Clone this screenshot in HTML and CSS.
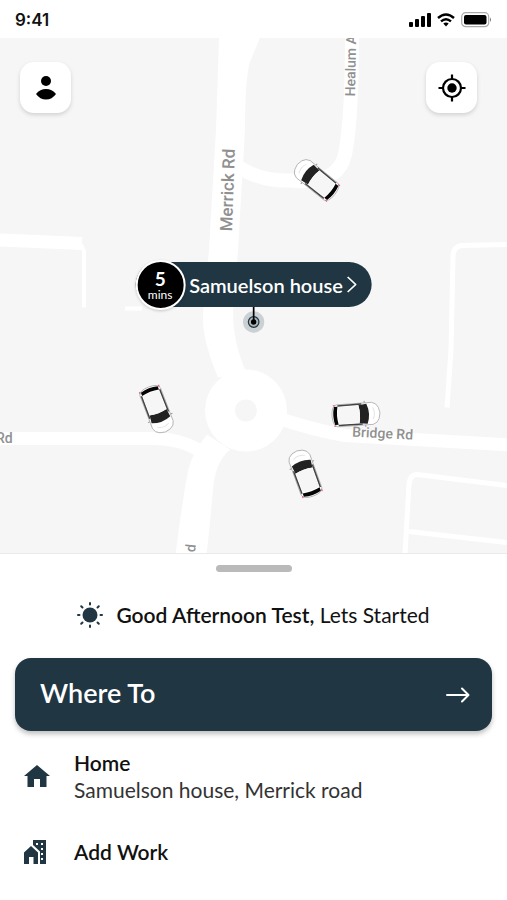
FILE: index.html
```
<!DOCTYPE html>
<html lang="en">
<head>
    <meta charset="UTF-8">
    <meta name="viewport" content="width=device-width, initial-scale=1.0">
    <title>Where To</title>
    <link rel="stylesheet" href="styles.css">
</head>
<body>
    <header class="status-bar">
        <span class="time">9:41</span>
        <div class="status-icons">
            <svg width="22" height="14" viewBox="0 0 22 14">
                <rect x="0" y="9" width="4" height="5" rx="1"/>
                <rect x="6" y="6" width="4" height="8" rx="1"/>
                <rect x="12" y="3" width="4" height="11" rx="1"/>
                <rect x="18" y="0" width="4" height="14" rx="1"/>
            </svg>
            <svg width="18" height="14" viewBox="0 0 18 14" fill="none" stroke="#000" stroke-width="2.4">
                <path d="M1 5Q9-2 17 5"/>
                <path d="M4 8.400Q9 4 14 8.400"/>
                <path d="M6.300 10.600Q9 8.500 11.700 10.600L9 13.500Z" fill="#000" stroke="none"/>
            </svg>
            <svg width="31" height="16" viewBox="0 0 31 16">
                <rect x="0.700" y="0.700" width="27" height="14" rx="4" fill="#fff" stroke="#aaa" stroke-width="1.200"/>
                <rect x="3" y="3" width="22.500" height="9.500" rx="2"/>
                <path d="M29 5.500Q31 7.700 29 10Z" fill="#777"/>
            </svg>
        </div>
    </header>

    <main class="map">
        <svg class="map-canvas" viewBox="0 38 507 516" preserveAspectRatio="xMidYMid slice">
            <defs>
                <g id="car">
                    <path d="M-11-11Q-13-23 0-24Q13-23 11-11L11 19Q10 24 0 24Q-10 24-11 19Z" fill="#fff" stroke="#aaa" stroke-width="0.800"/>
                    <path d="M-11-9H-13M11-9H13" stroke="#999"/>
                    <path d="M-6-17Q0-20 6-17" fill="none" stroke="#e4e4e4"/>
                    <path d="M-10-11Q0-15 10-11L9-3Q0-5-9-3Z" fill="#222"/>
                    <path d="M-10-6L-9.800 18M10-6L9.800 18" stroke="#444" stroke-width="1.500"/>
                    <path d="M-8.500-3Q0-5 8.500-3L8.500 17Q0 19-8.500 17Z" fill="#f6f6f6"/>
                    <path d="M-9 18Q0 20 9 18L9 21.500Q0 24-9 21.500Z" fill="#050505"/>
                    <path d="M-10.200 20.500V22.500M10.200 20.500V22.500" stroke="#e0607a" stroke-width="1.200"/>
                </g>
            </defs>

            <!-- side streets -->
            <g fill="none" stroke="#fff" stroke-linejoin="round">
                <path d="M238 167Q260 182 290 181Q338 186 345 155Q352 120 352 38" stroke-width="14"/>
                <path d="M-10 240L82 244" stroke-width="13"/>
                <path d="M81 245L84 252V308M125 309H142" stroke-width="4"/>
                <path d="M507 245L462 246Q453 247 453 257L451 350L447 408" stroke-width="5"/>
                <path d="M507 486L417 475Q410 475 409 485L405 554M409 532L507 543" stroke-width="5"/>
                <path d="M-10 439H150Q178 438 200 451M276 418Q315 431 345 436L520 446" stroke-width="13"/>
            </g>

            <!-- Merrick Rd and the roundabout -->
            <path d="M219 38L216 130L209 250L203 315Q202 340 218 378L247 374Q233 345 233 312L238 250L245 130Q245 85 249 65L260 38Z" fill="#fff"/>
            <path d="M207 435Q190 455 187 477Q181 510 175 560L206 560Q210 525 213 490Q215 463 230 450Z" fill="#fff"/>
            <circle cx="246" cy="411" r="41" fill="#fff"/>
            <circle cx="246" cy="411" r="11" fill="#f6f6f6"/>

            <use href="#car" transform="translate(316 180) rotate(-51)"/>
            <use href="#car" transform="translate(157 410) rotate(159)"/>
            <use href="#car" transform="translate(356 415) rotate(86)"/>
            <use href="#car" transform="translate(305 474) rotate(-20)"/>

            <g class="road-names">
                <text class="road-main" transform="translate(232 232) rotate(-88)">Merrick Rd</text>
                <text transform="translate(355 97) rotate(-89)">Healum A</text>
                <text transform="translate(352 437) rotate(3)">Bridge Rd</text>
                <text x="-4" y="443">Rd</text>
                <text transform="translate(195 553) rotate(-84)">d</text>
            </g>
        </svg>

        <div class="map-buttons">
            <button class="map-button" aria-label="Profile">
                <svg width="20" height="24" viewBox="0 0 20 24">
                    <circle cx="10" cy="5" r="5"/>
                    <path d="M0 18Q4 13 10 13T20 18Q16 23.500 10 23.500T0 18Z"/>
                </svg>
            </button>
            <button class="map-button" aria-label="My location">
                <svg width="28" height="28" viewBox="0 0 28 28">
                    <circle cx="14" cy="14" r="9" fill="none" stroke="#000" stroke-width="2.200"/>
                    <circle cx="14" cy="14" r="4.700"/>
                    <path d="M14 .5V5M14 23V27.500M.5 14H5M23 14H27.500" stroke="#000" stroke-width="2.200"/>
                </svg>
            </button>
        </div>

        <div class="pickup">
            <button class="pickup-label">
                <span class="eta"><b>5</b><small>mins</small></span>
                <span class="pickup-name">Samuelson house</span>
                <svg width="10" height="17" viewBox="0 0 10 17" fill="none" stroke="#fff" stroke-width="1.700">
                    <path d="M1 1L9 8.500L1 16"/>
                </svg>
            </button>
            <svg width="22" height="26" viewBox="0 0 22 26">
                <circle cx="11" cy="15" r="10.700" fill="#cbd0d3"/>
                <circle cx="11" cy="15" r="5.300" fill="#a9b3b9" stroke="#203643" stroke-width="1.200"/>
                <circle cx="11" cy="15" r="2.700"/>
                <path d="M11 0V15" stroke="#000" stroke-width="1.700"/>
            </svg>
        </div>
    </main>

    <section class="sheet">
        <div class="handle"></div>
        <p class="greeting">
            <svg width="26" height="26" viewBox="0 0 26 26" fill="none" stroke="#203643" stroke-width="2" stroke-linecap="round">
                <circle cx="13" cy="13" r="7.500" fill="#203643" stroke="none"/>
                <path d="M13 1V2.500M13 23.500V25M1 13H2.500M23.500 13H25M4.200 4.200L5.500 5.500M20.500 20.500L21.800 21.800M4.200 21.800L5.500 20.500M20.500 5.500L21.800 4.200"/>
            </svg>
            <span><b>Good Afternoon Test,</b> Lets Started</span>
        </p>
        <button class="where-to">
            <span>Where To</span>
            <svg width="24" height="16" viewBox="0 0 24 16" fill="none" stroke="#fff" stroke-width="2" stroke-linecap="round" stroke-linejoin="round">
                <path d="M1 8H22M16 1.500L22.500 8L16 14.500"/>
            </svg>
        </button>
        <a class="place" href="#home">
            <svg width="26" height="22" viewBox="0 0 26 22" fill="#203643">
                <path d="M13 0L26 11H22.500V22H16V14H10V22H3.500V11H0Z"/>
            </svg>
            <span class="place-text">
                <b>Home</b>
                <span>Samuelson house, Merrick road</span>
            </span>
        </a>
        <a class="place" href="#work">
            <svg width="26" height="24" viewBox="0 0 26 24" fill="#203643">
                <path d="M0 12.500L7 6L14 12.500V24H9.500V17H5V24H0Z"/>
                <path d="M9 0H22V24H16V11.500L9 5Z"/>
                <path d="M12 3H14V5H12ZM17 3H19V5H17ZM17 8H19V10H17ZM17 13H19V15H17ZM17 18H19V20H17Z" fill="#fff"/>
            </svg>
            <span class="place-text"><b>Add Work</b></span>
        </a>
    </section>
</body>
</html>
```
FILE: styles.css
```
* { box-sizing: border-box; }
body {
    margin: 0;
    min-height: 100vh;
    display: flex;
    flex-direction: column;
    font-family: Lato, sans-serif;
    background: white;
    color: #111;
}
button {
    border: none;
    font-family: inherit;
    cursor: pointer;
}
svg { flex-shrink: 0; }
b { font-weight: 600; }

.status-bar {
    display: flex;
    justify-content: space-between;
    align-items: center;
    height: 38px;
    padding: 2px 15px 0;
}
.time {
    font-family: Inter, sans-serif;
    font-size: 17px;
    font-weight: 600;
}
.status-icons {
    display: flex;
    align-items: center;
    gap: 6px;
}

.map {
    position: relative;
    flex: 1;
    min-height: 400px;
    background: #f6f6f6;
    overflow: hidden;
}
.map-canvas {
    position: absolute;
    width: 100%;
    height: 100%;
}
.road-names {
    font-family: Roboto, sans-serif;
    font-size: 14px;
    font-weight: 500;
    fill: #909090;
}
.road-main { font-size: 17px; }
.map-buttons {
    position: relative;
    display: flex;
    justify-content: space-between;
    padding: 24px 30px 0 20px;
}
.map-button {
    display: flex;
    align-items: center;
    justify-content: center;
    width: 51px;
    height: 51px;
    padding: 0;
    border-radius: 14px;
    background: white;
    box-shadow: 0 2px 4px rgba(0, 0, 0, 0.15);
}
.pickup {
    position: absolute;
    top: 224px;
    left: 50%;
    transform: translateX(-50%);
    display: flex;
    flex-direction: column;
    align-items: center;
}
.pickup-label {
    display: flex;
    align-items: center;
    gap: 4px;
    height: 45px;
    padding: 0 15px 0 0;
    border-radius: 23px;
    background: #203643;
    color: white;
    font-size: 20px;
    white-space: nowrap;
}
.pickup-name { font-weight: 600; }
.eta {
    display: flex;
    flex-direction: column;
    align-items: center;
    justify-content: center;
    width: 50px;
    height: 50px;
    border: 2px solid white;
    border-radius: 50%;
    background: black;
    box-shadow: 0 1px 3px rgba(0, 0, 0, 0.2);
}
.eta b {
    font-size: 19px;
    font-weight: 700;
    line-height: 19px;
}
.eta small {
    font-size: 12px;
    line-height: 13px;
}

.sheet {
    border-top: 1px solid #eaeaea;
    padding: 11px 15px 35px;
    font-size: 21px;
}
.handle {
    width: 76px;
    height: 7px;
    margin: 0 auto;
    border-radius: 4px;
    background: #bababa;
}
.greeting {
    display: flex;
    align-items: center;
    justify-content: center;
    gap: 13px;
    margin: 28px 0;
    line-height: 30px;
}
.where-to {
    display: flex;
    align-items: center;
    justify-content: space-between;
    width: 100%;
    height: 73px;
    padding: 0 22px 4px 25px;
    border-radius: 16px;
    background: #203643;
    box-shadow: 0 3px 5px rgba(0, 0, 0, 0.25);
    color: white;
    font-size: 27px;
    font-weight: 600;
}
.where-to svg { margin-top: 4px; }
.place {
    display: flex;
    align-items: center;
    gap: 24px;
    margin-top: 18px;
    padding-left: 9px;
    color: #333;
    line-height: 27px;
    text-decoration: none;
}
.place + .place { margin-top: 35px; }
.place-text {
    display: flex;
    flex-direction: column;
}
.place b { color: #111; }
```
